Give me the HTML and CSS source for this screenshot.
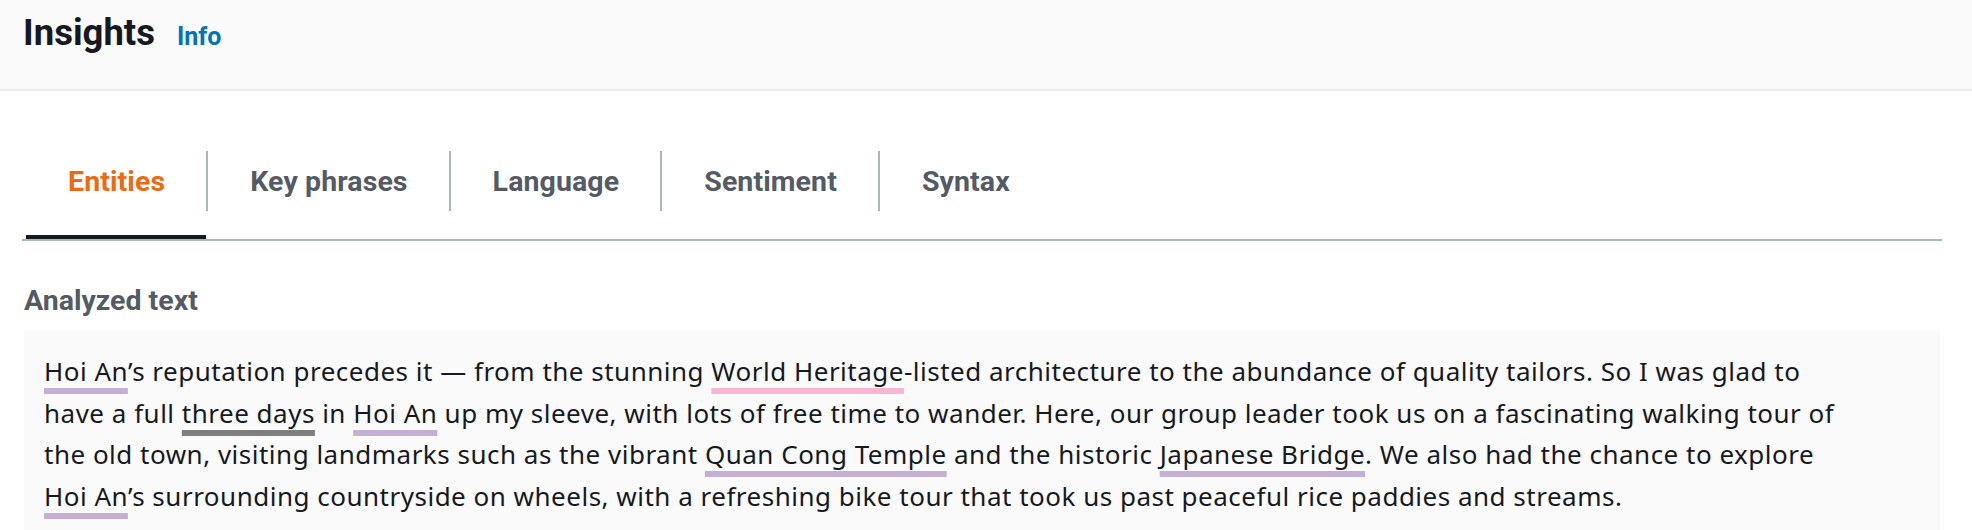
FILE: index.html
```html
<!DOCTYPE html>
<html lang="en">
<head>
<meta charset="utf-8">
<title>Insights</title>
<link rel="stylesheet" href="styles.css">
</head>
<body>
<header class="page-header">
  <h2 class="title">Insights</h2>
  <a class="info-link" href="#">Info</a>
</header>
<nav class="tabs">
  <ul class="tab-list">
    <li class="tab active"><span class="tab-label">Entities</span></li>
    <li class="tab"><span class="tab-label">Key phrases</span></li>
    <li class="tab"><span class="tab-label">Language</span></li>
    <li class="tab"><span class="tab-label">Sentiment</span></li>
    <li class="tab"><span class="tab-label">Syntax</span></li>
  </ul>
</nav>
<section class="analyzed">
  <h3 class="section-label">Analyzed text</h3>
  <div class="text-box">
    <p class="analyzed-text"><span class="ent ent-location">Hoi An</span>’s reputation precedes it — from the stunning <span class="ent ent-org">World Heritage</span>-listed architecture to the abundance of quality tailors. So I was glad to have a full <span class="ent ent-quantity">three days</span> in <span class="ent ent-location">Hoi An</span> up my sleeve, with lots of free time to wander. Here, our group leader took us on a fascinating walking tour of the old town, visiting landmarks such as the vibrant <span class="ent ent-location">Quan Cong Temple</span> and the historic <span class="ent ent-location">Japanese Bridge</span>. We also had the chance to explore <span class="ent ent-location">Hoi An</span>’s surrounding countryside on wheels, with a refreshing bike tour that took us past peaceful rice paddies and streams.</p>
  </div>
</section>
</body>
</html>
```

FILE: styles.css
```css
html, body {
  margin: 0;
  padding: 0;
  background: #ffffff;
  color: #16191f;
  font-family: "Noto Sans", "Open Sans", Arial, sans-serif;
}

.page-header {
  display: flex;
  align-items: baseline;
  gap: 22px;
  height: 79px;
  padding: 10px 23px 0;
  background: #fafafa;
  border-bottom: 2px solid #eaeded;
}

.title {
  margin: 0;
  font-family: Roboto, "Noto Sans", sans-serif;
  font-size: 36.5px;
  line-height: 45px;
  font-weight: 700;
  color: #16191f;
}

.info-link {
  font-family: Roboto, "Noto Sans", sans-serif;
  font-size: 25px;
  font-weight: 700;
  color: #0073bb;
  text-decoration: none;
}

.tabs {
  margin: 60px 30px 0 22px;
  border-bottom: 2px solid #aab7b8;
}

.tab-list {
  display: flex;
  margin: 0 0 0 4px;
  padding: 0;
  list-style: none;
}

.tab {
  padding-bottom: 24px;
  border-bottom: 4px solid transparent;
}

.tab.active {
  border-bottom-color: #16191f;
}

.tab-label {
  display: flex;
  align-items: center;
  height: 60px;
  padding: 0 41px 0 42px;
  font-family: Roboto, "Noto Sans", sans-serif;
  font-size: 28.5px;
  font-weight: 700;
  letter-spacing: 0.1px;
  color: #545b64;
}

.tab + .tab .tab-label {
  border-left: 2px solid #aab7b8;
}

.tab.active .tab-label {
  color: #ec6b12;
}

.analyzed {
  margin: 0 32px 0 24px;
}

.section-label {
  margin: 43px 0 13px;
  font-family: Roboto, "Noto Sans", sans-serif;
  font-size: 28.5px;
  line-height: 34px;
  font-weight: 700;
  color: #545b64;
}

.text-box {
  background: #fafafa;
  padding: 20px;
}

.analyzed-text {
  margin: 0;
  max-width: 1805px;
  font-size: 26px;
  line-height: 41.6px;
  letter-spacing: 0.5px;
  color: #16191f;
}

.ent {
  text-decoration-line: underline;
  text-decoration-thickness: 6px;
  text-underline-offset: 7px;
  text-decoration-skip-ink: none;
}

.ent-location { text-decoration-color: #c5b0d5; }
.ent-org { text-decoration-color: #f7b6d2; }
.ent-quantity { text-decoration-color: #7f7f7f; }
```
